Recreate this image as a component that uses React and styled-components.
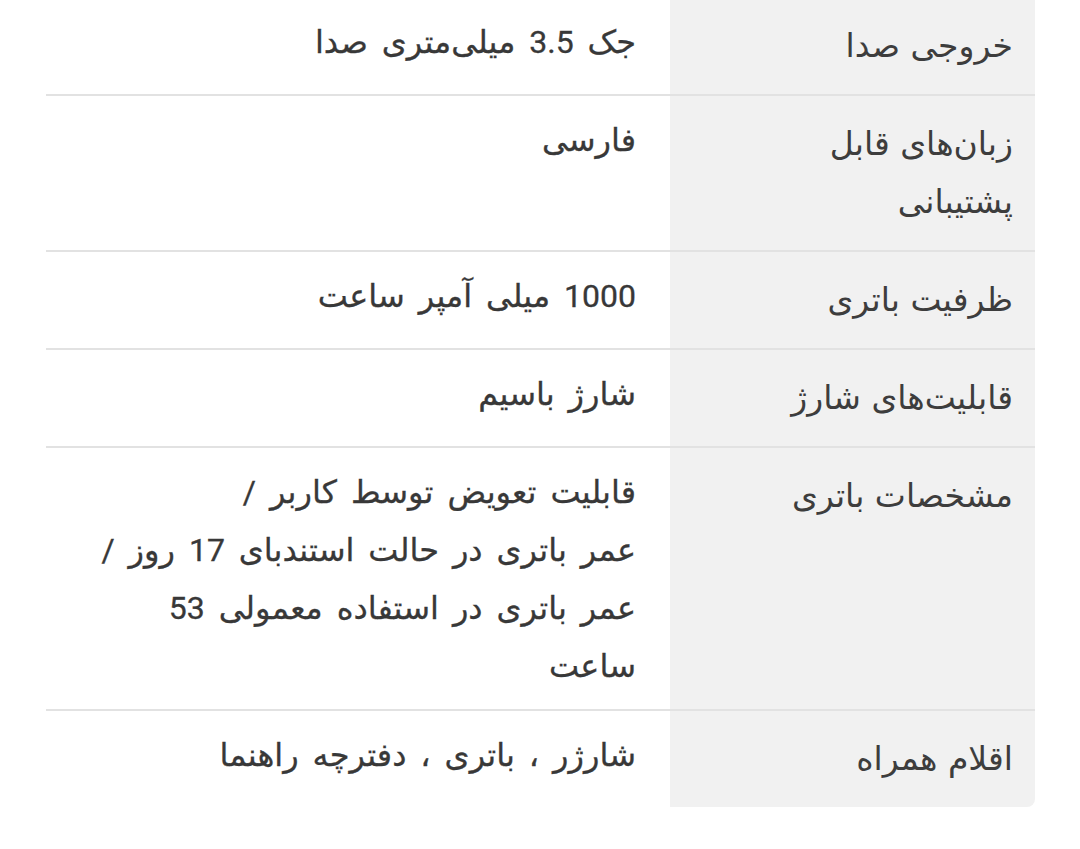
import React from 'react';
import styled, { createGlobalStyle } from 'styled-components';

const GlobalStyle = createGlobalStyle`
  body {
    margin: 0;
    background: #ffffff;
  }
`;

const Table = styled.div`
  direction: rtl;
  margin: -2px 45px 0 46px;
  display: flex;
  flex-direction: column;
`;

const Row = styled.div`
  display: flex;
  border-bottom: ${props => (props.last ? 'none' : '2px solid #e2e2e2')};
`;

const Label = styled.div`
  width: 365px;
  flex-shrink: 0;
  box-sizing: border-box;
  padding: 19px 22px 19px 40px;
  background: #f1f1f1;
  color: #3d3d3d;
  font-family: 'DejaVu Sans', 'Noto Sans', sans-serif;
  font-size: 33px;
  line-height: 58px;
  border-bottom-right-radius: ${props => (props.last ? '8px' : '0')};
`;

const Value = styled.div`
  flex: 1;
  box-sizing: border-box;
  padding: 15px 34px 14px 40px;
  color: #383838;
  font-family: Roboto, 'DejaVu Sans', sans-serif;
  font-size: 32px;
  line-height: 58px;
  word-spacing: 6px;
  -webkit-text-stroke: 0.3px #383838;
`;

const Line = styled.div``;

const specs = [
  { label: 'خروجی صدا', value: ['جک 3.5 میلی‌متری صدا'] },
  { label: 'زبان‌های قابل پشتیبانی', value: ['فارسی'] },
  { label: 'ظرفیت باتری', value: ['1000 میلی آمپر ساعت'] },
  { label: 'قابلیت‌های شارژ', value: ['شارژ باسیم'] },
  {
    label: 'مشخصات باتری',
    value: [
      'قابلیت تعویض توسط کاربر /',
      'عمر باتری در حالت استندبای 17 روز /',
      'عمر باتری در استفاده معمولی 53 ساعت',
    ],
  },
  { label: 'اقلام همراه', value: ['شارژر ، باتری ، دفترچه راهنما'] },
];

const App = () => (
  <>
    <GlobalStyle />
    <Table>
      {specs.map((item, i) => {
        const last = i === specs.length - 1;
        return (
          <Row key={item.label} last={last}>
            <Label last={last}>{item.label}</Label>
            <Value>
              {item.value.map(line => (
                <Line key={line}>{line}</Line>
              ))}
            </Value>
          </Row>
        );
      })}
    </Table>
  </>
);

export default App;
